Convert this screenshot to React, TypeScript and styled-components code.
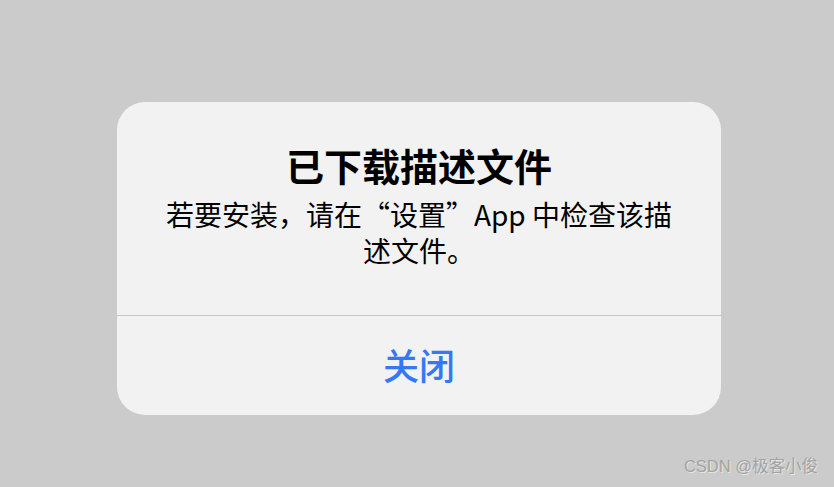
import styled, { createGlobalStyle } from 'styled-components'

const GlobalStyle = createGlobalStyle`
  html, body {
    margin: 0;
    padding: 0;
    background: #cbcbcb;
  }
  body {
    font-family: "Noto Sans CJK SC", "Noto Sans", sans-serif;
  }
`

const StyledPage = styled.div`
  position: relative;
  height: 487px;
  padding: 102px 0 0 117px;
  box-sizing: border-box;
  overflow: hidden;
`

const StyledAlert = styled.div`
  display: flex;
  flex-direction: column;
  width: 604px;
  height: 313px;
  background: #f2f2f2;
  border-radius: 28px;
  overflow: hidden;
`

const StyledBody = styled.div`
  display: flex;
  flex-direction: column;
  align-items: center;
  padding: 40px 30px 0;
  height: 214px;
  box-sizing: border-box;
  border-bottom: 1px solid #c6c6c6;
`

const StyledTitle = styled.h1`
  margin: 0;
  font-size: 38px;
  line-height: 46px;
  font-weight: 600;
  color: #000;
`

const StyledMessage = styled.p`
  margin: 8px 0 0;
  width: 512px;
  font-size: 28px;
  line-height: 36px;
  font-weight: 400;
  color: #000;
  text-align: center;
`

const StyledButton = styled.button`
  flex: 1;
  border: none;
  background: transparent;
  font-family: inherit;
  font-size: 36px;
  font-weight: 500;
  color: #3478f6;
  padding: 0 0 4px;
  cursor: pointer;
`

const StyledWatermark = styled.span`
  position: absolute;
  right: 16px;
  bottom: 10px;
  font-family: "Liberation Sans", "Noto Sans CJK SC", sans-serif;
  font-size: 16.5px;
  color: #a3a3a3;
  text-shadow: 1px 1px 0 #e4e4e4;
`

const App = () => {
  return (
    <>
      <GlobalStyle />
      <StyledPage>
        <StyledAlert role="alertdialog" aria-labelledby="alert-title">
          <StyledBody>
            <StyledTitle id="alert-title">已下载描述文件</StyledTitle>
            <StyledMessage>若要安装，请在“设置”App 中检查该描述文件。</StyledMessage>
          </StyledBody>
          <StyledButton>关闭</StyledButton>
        </StyledAlert>
        <StyledWatermark>CSDN @极客小俊</StyledWatermark>
      </StyledPage>
    </>
  )
}

export default App
